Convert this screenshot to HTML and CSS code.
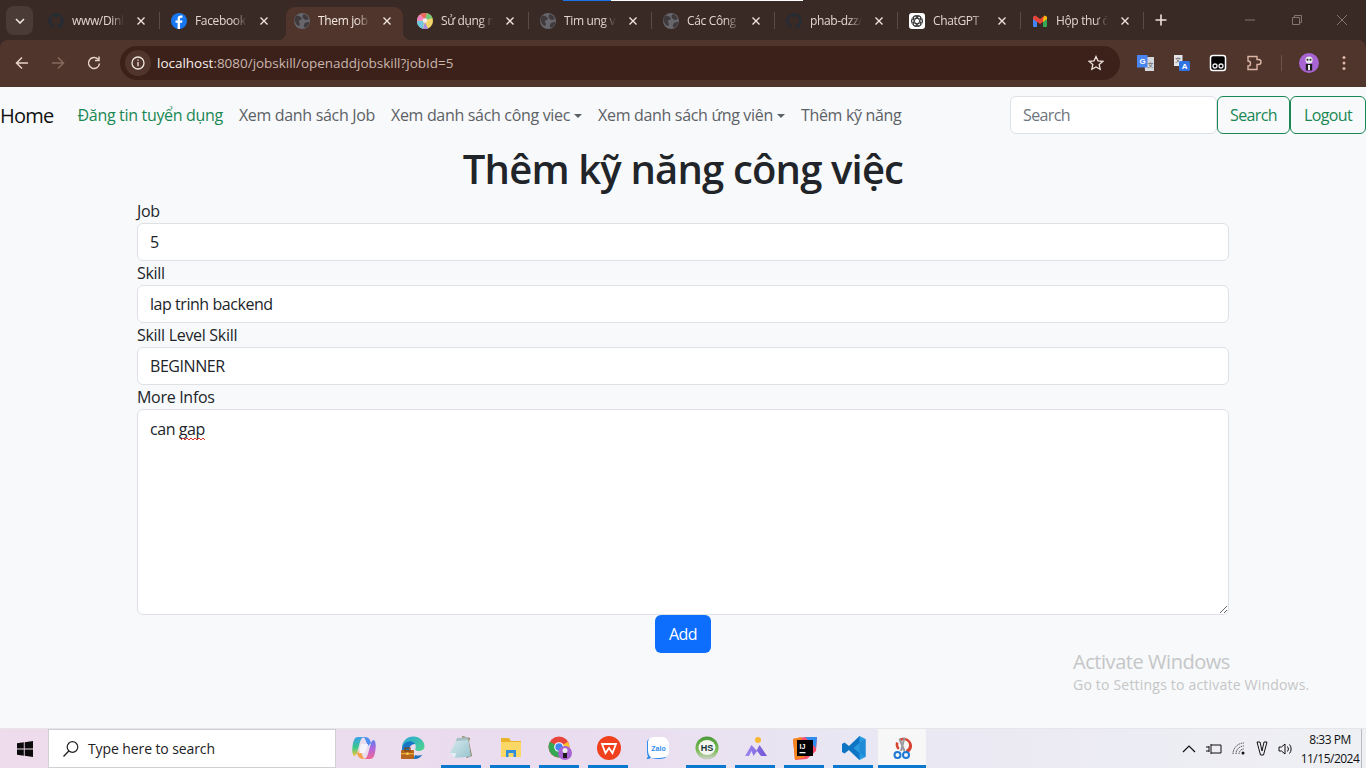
FILE: index.html
```html
<!DOCTYPE html>
<html lang="vi">
<head>
<meta charset="utf-8">
<title>Them job skill</title>
<link rel="stylesheet" href="styles.css">
</head>
<body>
<svg class="defs" width="0" height="0" aria-hidden="true">
  <defs>
    <linearGradient id="cpL" x1="0" y1="0" x2="0" y2="1"><stop offset="0" stop-color="#3fa0ee"/><stop offset=".55" stop-color="#38c98a"/><stop offset="1" stop-color="#f5c63c"/></linearGradient>
    <linearGradient id="cpR" x1="0" y1="0" x2="0" y2="1"><stop offset="0" stop-color="#5b7ff0"/><stop offset=".5" stop-color="#b765d8"/><stop offset="1" stop-color="#f2688f"/></linearGradient>
    <linearGradient id="edgeG" x1="0" y1="0" x2="1" y2="1"><stop offset="0" stop-color="#2aa7d8"/><stop offset="1" stop-color="#4fd68a"/></linearGradient>
    <linearGradient id="noteG" x1="0" y1="0" x2="1" y2="1"><stop offset="0" stop-color="#d9ecef"/><stop offset="1" stop-color="#98c3cf"/></linearGradient>
    <linearGradient id="hsG" x1="0" y1="0" x2="0" y2="1"><stop offset="0" stop-color="#4d9a3a"/><stop offset=".6" stop-color="#7cbd55"/><stop offset="1" stop-color="#cfd2cc"/></linearGradient>
    <linearGradient id="mtG" x1="0" y1="0" x2="1" y2="0"><stop offset="0" stop-color="#a08bf0"/><stop offset="1" stop-color="#6f52d6"/></linearGradient>
    <symbol id="globe" viewBox="0 0 16 16"><circle cx="8" cy="8" r="8" fill="#66666c"/><path d="M3 2.500c2 0 3.500 1 4.500 2.500s-.5 2-1.500 2-1.500 2-.5 3 0 3-1 3S.500 9 .500 7 2 2.500 3 2.500zM10 1c2 .5 4 2.500 5 5l-3 1c-1 0-2-1-3-2s0-4 1-4zM11 10c1-1 3-1 4.500-1 0 2-2.500 5.500-4.500 5.500s-1-3.500 0-4.500z" fill="#413a3c"/></symbol>
    <symbol id="github" viewBox="0 0 16 16"><path fill="#272b33" d="M8 0a8 8 0 0 0-2.500 15.600c.4.100.5-.2.5-.4v-1.400c-2.200.5-2.700-1-2.700-1-.4-.9-.9-1.200-.9-1.200-.7-.5.100-.5.100-.5.800.1 1.200.8 1.200.8.700 1.200 1.900.9 2.300.7.100-.5.300-.9.500-1.100-1.800-.2-3.700-.9-3.700-4 0-.9.300-1.600.8-2.100-.1-.2-.4-1 .1-2.100 0 0 .7-.2 2.200.8a7.600 7.600 0 0 1 4 0c1.500-1 2.200-.8 2.200-.8.500 1.100.2 1.900.1 2.100.5.500.8 1.200.8 2.100 0 3.100-1.900 3.800-3.700 4 .3.300.6.800.6 1.500v2.200c0 .2.100.5.600.4A8 8 0 0 0 8 0z"/></symbol>
    <symbol id="close" viewBox="0 0 10 10"><path d="M1.500 1.500l7 7M8.500 1.500l-7 7" stroke="#efe3dc" stroke-width="1.400" fill="none"/></symbol>
  </defs>
</svg>

<header class="browser">
  <div class="tabstrip">
    <div class="tab-menu"><svg width="10" height="6" viewBox="0 0 10 6"><path d="M1 1l4 4 4-4" stroke="#f0e6e0" stroke-width="1.600" fill="none"/></svg></div>
    <div class="tab sep"><svg class="fav"><use href="#github"/></svg><span class="tab-title">www/Dinh</span><svg class="tab-x"><use href="#close"/></svg></div>
    <div class="tab"><svg class="fav" viewBox="0 0 16 16"><circle cx="8" cy="8" r="8" fill="#1877f2"/><path d="M9 16V9.800h2l.4-2.400H9V6c0-.8.300-1.200 1.300-1.200h1.200V2.600C11 2.500 10.400 2.400 9.800 2.400 7.900 2.400 6.600 3.500 6.600 5.700v1.700H4.500v2.400h2.100V16z" fill="#fff"/></svg><span class="tab-title">Facebook</span><svg class="tab-x"><use href="#close"/></svg></div>
    <div class="tab active"><svg class="fav"><use href="#globe"/></svg><span class="tab-title">Them job skill</span><svg class="tab-x"><use href="#close"/></svg></div>
    <div class="tab sep"><svg class="fav" viewBox="0 0 16 16"><circle cx="8" cy="8" r="8" fill="#f3d667"/><path d="M8 7L3 1.500A8 8 0 0 1 10 .3z" fill="#e8695e"/><path d="M8 7L10 .3a8 8 0 0 1 5.500 5z" fill="#72c77d"/><path d="M8 7L3 1.500A8 8 0 0 0 0 8z" fill="#ee82c4"/><path d="M7 8H0a8 8 0 0 0 6 7.800z" fill="#6fc7e4"/><path d="M8 9l-2 6.800a8 8 0 0 0 5 0z" fill="#a98be0"/><circle cx="8" cy="7.500" r="2.300" fill="#f6eaf0"/></svg><span class="tab-title">Sử dụng mã</span><svg class="tab-x"><use href="#close"/></svg></div>
    <div class="tab sep"><svg class="fav"><use href="#globe"/></svg><span class="tab-title">Tim ung vien</span><svg class="tab-x"><use href="#close"/></svg></div>
    <div class="tab sep"><svg class="fav"><use href="#globe"/></svg><span class="tab-title">Các Công ty</span><svg class="tab-x"><use href="#close"/></svg></div>
    <div class="tab sep"><svg class="fav"><use href="#github"/></svg><span class="tab-title">phab-dzz/www</span><svg class="tab-x"><use href="#close"/></svg></div>
    <div class="tab sep"><svg class="fav" viewBox="0 0 16 16"><rect width="16" height="16" rx="3" fill="#fff"/><g fill="none" stroke="#333" stroke-width=".9"><circle cx="8" cy="8" r="5.500"/><ellipse cx="8" cy="8" rx="5.500" ry="2.500"/><ellipse cx="8" cy="8" rx="5.500" ry="2.500" transform="rotate(60 8 8)"/><ellipse cx="8" cy="8" rx="5.500" ry="2.500" transform="rotate(120 8 8)"/></g></svg><span class="tab-title">ChatGPT</span><svg class="tab-x"><use href="#close"/></svg></div>
    <div class="tab sep"><svg class="fav" viewBox="0 0 16 16"><path d="M1 14V4l2.500-1.500L5 6v8H2a1 1 0 0 1-1-1z" fill="#4285f4"/><path d="M11 14V6l1.500-3.500L15 4v9a1 1 0 0 1-1 1z" fill="#34a853"/><path d="M3.500 2.500L8 6l4.500-3.500L13 3l2 1v2l-7 5-7-5V4z" fill="#ea4335"/><path d="M11 6l1.500-3.500L15 4v2l-4 3z" fill="#fbbc04"/></svg><span class="tab-title">Hộp thư đến</span><svg class="tab-x"><use href="#close"/></svg></div>
    <div class="tab-new"><svg width="12" height="12" viewBox="0 0 12 12"><path d="M6 .5v11M.5 6h11" stroke="#efe3dc" stroke-width="1.600"/></svg></div>
    <div class="win-controls">
      <svg width="46" height="12" viewBox="0 0 46 12"><path d="M18 6h10" stroke="#85746e"/></svg>
      <svg width="46" height="12" viewBox="0 0 46 12"><path d="M19.500 3.500h7v7h-7zM21.500 3.500v-2h7v7h-2" stroke="#85746e" fill="none"/></svg>
      <svg width="46" height="12" viewBox="0 0 46 12"><path d="M18 1l10 10M28 1L18 11" stroke="#85746e"/></svg>
    </div>
  </div>
  <div class="toolbar">
    <svg class="tool-ic" viewBox="0 0 16 16"><path d="M14 8H2.500M8 2.500L2.500 8 8 13.500" stroke="#e6d2c8" stroke-width="1.500" fill="none"/></svg>
    <svg class="tool-ic" viewBox="0 0 16 16"><path d="M2 8h11.500M8 2.500L13.500 8 8 13.500" stroke="#86695e" stroke-width="1.500" fill="none"/></svg>
    <svg class="tool-ic" viewBox="0 0 16 16"><path d="M13.500 8.500A5.500 5.500 0 1 1 12 4.200M13 1.500v4H9" stroke="#e6d2c8" stroke-width="1.500" fill="none"/></svg>
    <div class="omnibox">
      <div class="site-info"><svg width="14" height="14" viewBox="0 0 14 14"><circle cx="7" cy="7" r="6" stroke="#f0e6e0" stroke-width="1.300" fill="none"/><path d="M7 6v4.200M7 3.500v1.300" stroke="#f0e6e0" stroke-width="1.300"/></svg></div>
      <span class="url"><span class="url-host">localhost</span>:8080/jobskill/openaddjobskill?jobId=5</span>
      <svg class="star" width="16" height="16" viewBox="0 0 16 16"><path d="M8 1.500l2 4.400 4.800.5-3.600 3.200 1 4.700L8 11.900l-4.200 2.400 1-4.700L1.200 6.400 6 5.900z" stroke="#efe3dc" stroke-width="1.300" fill="none"/></svg>
    </div>
    <div class="ext-row">
      <svg class="ext" viewBox="0 0 18 18"><path d="M7 3h10v14H8z" fill="#d5d8dc"/><path d="M0 1h10.500v12.500H0z" fill="#4a84ef"/><text x="2.500" y="10" class="ext-g">G</text><text x="10.500" y="12.500" class="ext-t">文</text></svg>
      <svg class="ext" viewBox="0 0 18 18"><path d="M1 1h8.500v11H1z" fill="#e4e6ea"/><text x="2" y="8" class="ext-t">文</text><rect x="6" y="7" width="11" height="10" rx="1.500" fill="#2f74e0"/><text x="8.800" y="15" class="ext-a">A</text></svg>
      <svg class="ext" viewBox="0 0 18 18"><rect x="1.500" y="1.500" width="15" height="15" rx="2.500" fill="#000" stroke="#fff" stroke-width="1.500"/><circle cx="6" cy="12" r="2" fill="#000" stroke="#eee" stroke-width="1.300"/><circle cx="12" cy="12" r="2" fill="#000" stroke="#eee" stroke-width="1.300"/></svg>
      <svg class="ext" viewBox="0 0 18 18"><path d="M2 3h9v3h1.500a2.500 2.500 0 0 1 0 5H11v5H2v-3.500a2.500 2.500 0 0 0 0-5z" transform="translate(1 -.5)" stroke="#dcb5a6" stroke-width="1.400" fill="none"/></svg>
      <span class="tool-sep"></span>
      <svg class="avatar" viewBox="0 0 20 20"><circle cx="10" cy="10" r="10" fill="#a964d4"/><circle cx="10" cy="7" r="3.600" fill="#e8e8e8"/><circle cx="8.500" cy="6.800" r="1" fill="#222"/><circle cx="11.500" cy="6.800" r="1" fill="#222"/><path d="M6.800 11h6.400v6.500H6.800z" fill="#1c1c1c"/><path d="M9 12h2v5H9z" fill="#eee"/></svg>
      <svg class="kebab" width="4" height="16" viewBox="0 0 4 16"><circle cx="2" cy="2.500" r="1.500" fill="#dcb5a6"/><circle cx="2" cy="8" r="1.500" fill="#dcb5a6"/><circle cx="2" cy="13.500" r="1.500" fill="#dcb5a6"/></svg>
    </div>
  </div>
</header>
<div class="loadline"><span class="load-blue"></span><span class="load-white"></span></div>

<main class="page">
  <nav class="navbar">
    <a class="brand">Home</a>
    <a class="nav-link first">Đăng tin tuyển dụng</a>
    <a class="nav-link">Xem danh sách Job</a>
    <a class="nav-link caret">Xem danh sách công viec</a>
    <a class="nav-link caret">Xem danh sách ứng viên</a>
    <a class="nav-link">Thêm kỹ năng</a>
    <div class="nav-right">
      <input class="nav-search" placeholder="Search">
      <button class="btn-outline btn-search">Search</button>
      <button class="btn-outline btn-logout">Logout</button>
    </div>
  </nav>
  <h1 class="title">Thêm kỹ năng công việc</h1>
  <form class="job-form">
    <label class="field-label">Job</label>
    <input class="field" value="5">
    <label class="field-label">Skill</label>
    <input class="field" value="lap trinh backend">
    <label class="field-label">Skill Level Skill</label>
    <input class="field" value="BEGINNER">
    <label class="field-label">More Infos</label>
    <div class="area-wrap">
      <textarea class="field area" spellcheck="false">can gap</textarea>
      <svg class="squiggle" width="25" height="4" viewBox="0 0 25 4"><path d="M0 3l2-2 2 2 2-2 2 2 2-2 2 2 2-2 2 2 2-2 2 2 2-2 2 2" stroke="#d9332a" fill="none"/></svg>
    </div>
    <button class="btn-add" type="button">Add</button>
  </form>
  <div class="watermark">
    <div class="wm-title">Activate Windows</div>
    <div class="wm-sub">Go to Settings to activate Windows.</div>
  </div>
</main>

<footer class="taskbar">
  <div class="start"><svg width="16" height="16" viewBox="0 0 16 16"><path d="M0 2.300L6.800 1.300V7.500H0zM7.700 1.200L16 0V7.500H7.700zM0 8.400H6.800V14.700L0 13.700zM7.700 8.400H16V16L7.700 14.800z" fill="#0b0b0b"/></svg></div>
  <div class="tb-search">
    <svg width="18" height="18" viewBox="0 0 18 18"><circle cx="10.500" cy="7" r="5.300" stroke="#222" stroke-width="1.200" fill="none"/><path d="M6.800 11L1.500 16.500" stroke="#222" stroke-width="1.300"/></svg>
    <span>Type here to search</span>
  </div>
  <div class="tb-apps">
    <div class="app"><svg viewBox="0 0 24 24"><path d="M6 1h7c-3 0-4 2-5 5L5 17c-.5 2-2 3-3 3-2-2-2-6-1.500-9C1 6 2 1 6 1z" fill="url(#cpL)"/><path d="M18 23h-7c3 0 4-2 5-5l3-11c.5-2 2-3 3-3 2 2 2 6 1.500 9-.5 5-1.500 10-5.500 10z" fill="url(#cpR)"/><path d="M13 1c2 0 4 1 5 3l1 3-3 3-3-7c-.5-1-1-2-3-2z" fill="#4f8df0"/><path d="M11 23c-2 0-4-1-5-3l-1-3 3-3 3 7c.5 1 1 2 3 2z" fill="#f5a24c"/><path d="M9 8l7 0-3 9-6 0z" fill="#f7f3fa"/></svg></div>
    <div class="app"><svg viewBox="0 0 24 24"><path d="M1 12C1 5 6 .5 12.500.5c6 0 11 4.500 11 10 0 3-3 4.500-6 4.500-2.500 0-4-1-3-2.500 1-4-1-6.500-4-6.500C6 6 2 9 1 12z" fill="url(#edgeG)"/><path d="M1 12c1-4 5-7.500 9.500-6.500 2 .5 3.500 1.500 3.500 2.500-4 0-6 3-6 6.500 0 4 3 7 7 8-2 .5-5 .8-7-.2C3.500 21 1 17 1 12z" fill="#1677c6"/><path d="M14 23c3 0 6-2 7.500-4.500-2 1-5 1.500-7 .5-1.500 1-2 3-.5 4z" fill="#1c6fb8"/><rect x="0" y="14" width="13" height="9" rx="1" fill="#b5651d"/><rect x="4" y="12" width="5" height="3" fill="none" stroke="#7e4510" stroke-width="1.200"/><rect x="0" y="17" width="13" height="1.300" fill="#e6a93a"/><rect x="5.500" y="16.500" width="2" height="2.500" fill="#f7d25c"/></svg></div>
    <div class="app on"><svg viewBox="0 0 24 24"><path d="M12 0l8 2-1 4 3 14-5 2-2-2z" fill="#8d7d5a"/><path d="M7 2l11-.5 3 19L5 22 0 17z" fill="url(#noteG)"/><path d="M7 2l11-.5.3 2.500L6 5z" fill="#a9bfc6"/><path d="M0 17l5 5 1-5z" fill="#e6eff1"/></svg></div>
    <div class="app on"><svg viewBox="0 0 24 24"><path d="M2 2h8l2 3h10v3H2z" fill="#eab32e"/><path d="M2 6h20v15H2z" fill="#fbd765"/><path d="M7 14h10v7h-2.500v-4h-5v4H7z" fill="#2f8fd8"/></svg></div>
    <div class="app on"><svg viewBox="0 0 24 24"><circle cx="11" cy="11" r="10.500" fill="#e8453c"/><path d="M11 11L20 5.800A10.500 10.500 0 0 1 16 20.200z" fill="#fbc02d"/><path d="M11 11L16 20.200A10.500 10.500 0 0 1 1.900 5.800z" fill="#34a853"/><circle cx="11" cy="11" r="4.800" fill="#fff"/><circle cx="11" cy="11" r="3.700" fill="#4285f4"/><circle cx="17" cy="17" r="7" fill="#a964d4"/><circle cx="17" cy="14.500" r="2.500" fill="#ececec"/><path d="M15 17h4v5h-4z" fill="#1c1c1c"/></svg></div>
    <div class="app on"><svg viewBox="0 0 24 24"><circle cx="12" cy="12" r="12" fill="#f0401e"/><path d="M5 8h14l-3.500 9-3.500-5-3.500 5z" stroke="#fff" stroke-width="1.800" fill="none"/></svg></div>
    <div class="app"><svg viewBox="0 0 24 24"><rect x="1" y="1" width="22" height="21" rx="7" fill="#fff"/><path d="M1 6v10c0 3 1 4 1 4-.5 1.500-1 2-1.500 3 2 0 3.500-.5 4.500-1.500C3 20 2 17 2 14V6c0-1 .5-2 1-3-1 .5-2 1.500-2 3z" fill="#2f8df0"/><path d="M5 22c5 1.500 12 1.500 16-1-3 .5-11 1.500-16 1z" fill="#2f8df0"/><text x="12.500" y="14.500" class="zalo">Zalo</text></svg></div>
    <div class="app on"><svg viewBox="0 0 24 24"><circle cx="12" cy="12" r="11.500" fill="url(#hsG)"/><ellipse cx="12" cy="11.500" rx="8.500" ry="7.500" fill="#f4f6ef"/><text x="12" y="15" class="hs">HS</text></svg></div>
    <div class="app on"><svg viewBox="0 0 24 24"><circle cx="14" cy="4" r="3" fill="#f7b733"/><path d="M1 20l6.500-11 5 5.500L15.500 9 23 20h-6l-4-5-3.500 5-2-5L5 20z" fill="url(#mtG)"/></svg></div>
    <div class="app on"><svg viewBox="0 0 24 24"><path d="M0 3l12-2 12 0-1 14-9 8-12 1z" fill="#fd4f6c"/><path d="M12 1h12l-1 11z" fill="#2f8df0"/><path d="M0 3l8-2 4 20-10 3z" fill="#f6841c"/><rect x="4" y="4" width="16" height="16" fill="#000"/><text x="6.500" y="12.500" class="ij">IJ</text><rect x="6.500" y="16" width="6" height="1.300" fill="#fff"/></svg></div>
    <div class="app on"><svg viewBox="0 0 24 24"><path d="M17.500 0L23.500 3v18l-6 3L7 14z" fill="#2a9ae0"/><path d="M17.500 0L7 10 2.500 6.500 0 8v8l2.500 1.500L7 14l10.500 10V17l-6-5 6-5z" fill="#0e74c4"/><path d="M17.500 7v10l6 4V3z" fill="#1f8ad6"/></svg></div>
    <div class="app on current"><svg viewBox="0 0 24 24"><path d="M9 3c5-3 12 0 13 6 .5 4-2 7-5 8l-1-3c2-1 3-3 3-5 0-4-5-6-8-4z" fill="#d64532"/><path d="M6 6c-1 3 0 6 2 8l1.500-2C8 10 8 8 8.500 7z" fill="#d64532"/><path d="M14.500 1.500L11 15M9.500 3l5 12" stroke="#9a9a9e" stroke-width="2"/><circle cx="7.500" cy="19" r="3" fill="none" stroke="#1c78d4" stroke-width="2"/><circle cx="16" cy="19" r="3" fill="none" stroke="#1c78d4" stroke-width="2"/></svg></div>
  </div>
  <div class="tray">
    <svg width="14" height="8" viewBox="0 0 14 8"><path d="M1 7l6-6 6 6" stroke="#111" stroke-width="1.200" fill="none"/></svg>
    <svg width="16" height="12" viewBox="0 0 16 12"><path d="M5 2h10v8H5M5 1v10M0 4h3M0 8h3M3 3v6" stroke="#111" fill="none"/></svg>
    <svg width="14" height="13" viewBox="0 0 14 13"><path d="M1 12a11 11 0 0 1 11-11M4 12a8 8 0 0 1 8-8M7 12a5 5 0 0 1 5-5" stroke="#444" stroke-dasharray="1.500 .8" fill="none"/><circle cx="11" cy="11" r="1.500" fill="#111"/></svg>
    <svg width="12" height="15" viewBox="0 0 12 15"><path d="M1 1h3l2 9 2-9h3L7.500 14h-3z" stroke="#111" fill="none"/></svg>
    <svg width="16" height="14" viewBox="0 0 16 14"><path d="M1 5h2.500L7 2v10L3.500 9H1zM9.500 4.500a4 4 0 0 1 0 5M11.500 2.500a7 7 0 0 1 0 9" stroke="#111" fill="none"/></svg>
    <div class="clock"><span>8:33 PM</span><span>11/15/2024</span></div>
    <span class="show-desktop"></span>
  </div>
</footer>
</body>
</html>
```
FILE: styles.css
```css
* { box-sizing: border-box; }
html, body { margin: 0; height: 768px; overflow: hidden; }
body { display: flex; flex-direction: column; width: 1366px; font-family: "Open Sans", "Noto Sans", sans-serif; background: #f8f9fa; color: #212529; position: relative; }
.defs { position: absolute; }

/* browser chrome */
.browser { height: 87px; flex: none; background: #3a2a26; }
.tabstrip { height: 40px; display: flex; align-items: flex-end; padding-left: 6px; }
.tab-menu { width: 27px; height: 29px; margin: 0 4px 5px 0; border-radius: 8px; background: #4a3b37; display: flex; align-items: center; justify-content: center; }
.tab { width: 123px; height: 33px; display: flex; align-items: center; padding: 0 10px 6px 11px; position: relative; color: #e3d4cc; font-size: 12px; letter-spacing: -.35px; }
.tab.active { width: 117px; margin: 0 3px; padding-left: 8px; padding-right: 7px; background: #50352c; border-radius: 9px 9px 0 0; color: #f3e9e3; }
.tab.active::before, .tab.active::after { content: ""; position: absolute; bottom: 0; width: 8px; height: 8px; }
.tab.active::before { left: -8px; background: radial-gradient(circle at 0 0, transparent 8px, #50352c 8.500px); }
.tab.active::after { right: -8px; background: radial-gradient(circle at 100% 0, transparent 8px, #50352c 8.500px); }
.tab.sep::after { content: ""; position: absolute; right: 0; top: 5px; height: 17px; width: 1px; background: #5d4a44; }
.fav { width: 16px; height: 16px; flex: none; margin-right: 8px; }
.tab-title { flex: 1; min-width: 0; white-space: nowrap; overflow: hidden; -webkit-mask-image: linear-gradient(90deg, #000 75%, transparent); mask-image: linear-gradient(90deg, #000 75%, transparent); }
.tab-x { width: 10px; height: 10px; flex: none; margin: 0 4px 0 12px; }
.tab-new { width: 26px; height: 34px; display: flex; align-items: center; justify-content: center; padding-bottom: 6px; margin-left: 4px; }
.win-controls { margin-left: auto; display: flex; align-self: stretch; align-items: center; margin-right: 1px; }
.win-controls svg { flex: none; }
.toolbar { height: 47px; background: #50352c; border-radius: 8px 8px 0 0; display: flex; align-items: center; padding: 0 12px 1px 14px; }
.tool-ic { width: 16px; height: 16px; flex: none; margin-right: 20px; }
.tool-ic:nth-child(3) { margin-right: 18px; }
.omnibox { width: 1000px; height: 34px; background: #3c211b; border-radius: 17px; display: flex; align-items: center; padding: 0 16px 0 5px; }
.site-info { width: 26px; height: 26px; border-radius: 50%; background: #50352c; display: flex; align-items: center; justify-content: center; flex: none; margin-right: 6px; }
.url { color: #c9b6ac; font-size: 13.500px; letter-spacing: -.02px; white-space: nowrap; }
.url-host { color: #f6eee9; }
.star { margin-left: auto; flex: none; }
.ext-row { display: flex; align-items: center; margin-left: 17px; }
.ext { width: 18px; height: 18px; margin-right: 18px; flex: none; }
.ext-g { font: 700 8px "Liberation Sans", sans-serif; fill: #fff; }
.ext-a { font: 700 8px "Liberation Sans", sans-serif; fill: #fff; }
.ext-t { font: 6px "Noto Sans CJK SC", sans-serif; fill: #555; }
.tool-sep { width: 1px; height: 16px; background: #6d534a; margin: 0 17px 0 0; }
.avatar { width: 20px; height: 20px; flex: none; margin-right: 23px; }
.kebab { flex: none; }
.loadline { position: absolute; top: 0; left: 563px; display: flex; height: 1px; }
.load-blue { width: 48px; background: #1a73e8; }
.load-white { width: 192px; background: #fff; }

/* page */
.page { flex: 1; min-height: 0; position: relative; background: #f8f9fa; }
.navbar { height: 56px; display: flex; align-items: center; }
.navbar a { white-space: nowrap; }
.brand { font-size: 20px; color: #111; margin-right: 16px; letter-spacing: -.75px; }
.nav-link { font-size: 16px; color: #5c6166; padding: 0 8px; letter-spacing: -.32px; }
.nav-link.first { color: #198754; }
.caret::after { content: ""; display: inline-block; margin-left: 4px; vertical-align: 3px; border-top: 4.800px solid #5c6166; border-left: 4.800px solid transparent; border-right: 4.800px solid transparent; }
.nav-right { margin-left: auto; display: flex; }
.nav-search { width: 207px; height: 38px; border: 1px solid #dee2e6; border-radius: 6px; padding: 0 12px; font: 16px "Open Sans", sans-serif; letter-spacing: -.6px; background: #fff; }
.nav-search::placeholder { color: #6c757d; opacity: 1; }
.btn-outline { height: 38px; border: 1px solid #198754; border-radius: 6px; background: transparent; color: #198754; font: 16px "Open Sans", sans-serif; letter-spacing: -.6px; padding: 0; }
.btn-search { width: 73px; }
.btn-logout { width: 76px; }
.title { margin: 0 0 8px; height: 48px; font-size: 40px; line-height: 51px; font-weight: 600; text-align: center; letter-spacing: -.83px; color: #212529; }
.job-form { width: 1092px; margin: 0 auto 0 137px; display: flex; flex-direction: column; }
.field-label { height: 24px; line-height: 24px; font-size: 16px; letter-spacing: -.3px; color: #212529; }
.field { width: 100%; height: 38px; border: 1px solid #dee2e6; border-radius: 6px; background: #fff; padding: 6px 12px; font: 16px/24px "Open Sans", sans-serif; letter-spacing: -.45px; color: #212529; display: block; }
.area-wrap { position: relative; }
.area { height: 206px; padding-top: 7px; resize: vertical; }
.squiggle { position: absolute; left: 44px; top: 28px; }
.btn-add { align-self: center; width: 56px; height: 38px; border: 0; border-radius: 6px; background: #0d6efd; color: #fff; font: 16px "Open Sans", sans-serif; letter-spacing: -.6px; padding: 0; }
.watermark { position: absolute; left: 1073px; top: 562px; color: #c4c6c8; white-space: nowrap; }
.wm-title { font-size: 20px; line-height: 26px; letter-spacing: -.45px; }
.wm-sub { font-size: 14px; line-height: 20px; letter-spacing: .2px; }

/* taskbar */
.taskbar { height: 40px; flex: none; display: flex; align-items: stretch; background: linear-gradient(90deg, #eedbec 0, #e9ddef 45%, #e9e7f3 62%, #eff0f4 100%); border-top: 1px solid #e6e6ea; }
.start { width: 48px; display: flex; align-items: center; justify-content: center; padding-left: 2px; }
.tb-search { width: 288px; background: #fff; border: 1px solid #cfcfd4; display: flex; align-items: center; padding-left: 13px; gap: 8px; font-size: 14px; letter-spacing: -.1px; color: #222; }
.tb-apps { display: flex; margin-left: 3px; }
.app { width: 49px; display: flex; align-items: center; justify-content: center; position: relative; padding-bottom: 1px; }
.app svg { width: 24px; height: 24px; }
.app.on::after { content: ""; position: absolute; left: 4px; right: 5px; bottom: 0; height: 3px; background: #0b78cf; }
.app.current { background: #f7f7f8; width: 48px; }
.app.current::after { left: 0; right: 0; }
.zalo { font: 700 7px "Liberation Sans", sans-serif; fill: #2f8df0; text-anchor: middle; }
.hs { font: 700 9px "Liberation Sans", sans-serif; fill: #16323a; text-anchor: middle; }
.ij { font: 700 7px "Liberation Sans", sans-serif; fill: #fff; }
.tray { margin-left: auto; display: flex; align-items: center; gap: 10px; color: #111; }
.clock { display: flex; flex-direction: column; align-items: center; font-size: 12px; line-height: 19px; letter-spacing: -.5px; width: 62px; margin-left: -5px; }
.show-desktop { width: 1px; height: 100%; background: #b9b9c0; margin-left: -10px; margin-right: 4px; }
```
